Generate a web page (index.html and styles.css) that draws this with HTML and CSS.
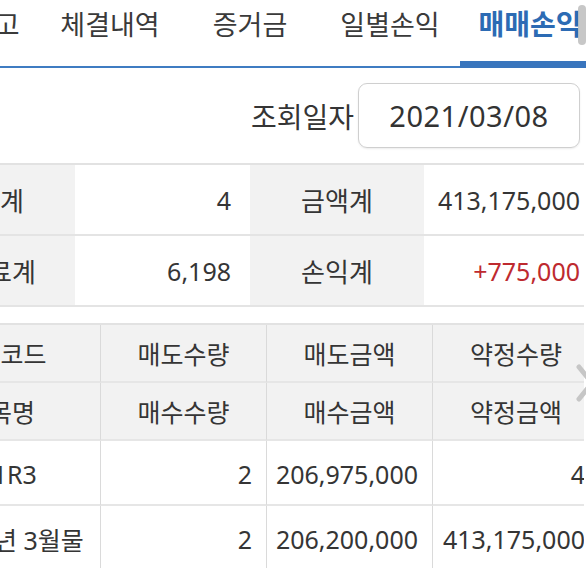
FILE: index.html
```html
<!DOCTYPE html>
<html lang="ko">
<head>
<meta charset="utf-8">
<title>매매손익</title>
<link rel="stylesheet" href="styles.css">
</head>
<body>
<div class="screen">
  <nav class="tabbar">
    <div class="tabs">
      <div class="tab">미결잔고</div>
      <div class="tab">체결내역</div>
      <div class="tab">증거금</div>
      <div class="tab">일별손익</div>
      <div class="tab active">매매손익</div>
    </div>
  </nav>

  <div class="search">
    <span class="search-label">조회일자</span>
    <div class="date-box">2021/03/08</div>
  </div>

  <div class="viewport">
    <div class="scroller">
      <div class="summary">
        <div class="s-label">수량계</div>
        <div class="s-value">4</div>
        <div class="s-label">금액계</div>
        <div class="s-value">413,175,000</div>
        <div class="s-label">수수료계</div>
        <div class="s-value">6,198</div>
        <div class="s-label">손익계</div>
        <div class="s-value up">+775,000</div>
      </div>

      <div class="grid">
        <div class="th">종목코드</div>
        <div class="th">매도수량</div>
        <div class="th">매도금액</div>
        <div class="th">약정수량</div>
        <div class="th">종목명</div>
        <div class="th">매수수량</div>
        <div class="th">매수금액</div>
        <div class="th">약정금액</div>

        <div class="td name">101R3</div>
        <div class="td">2</div>
        <div class="td">206,975,000</div>
        <div class="td">4</div>
        <div class="td name">F 2021년 3월물</div>
        <div class="td">2</div>
        <div class="td">206,200,000</div>
        <div class="td">413,175,000</div>
      </div>
    </div>
  </div>

  <div class="scroll-thumb"></div>
  <svg class="scroll-hint" width="12" height="42" viewBox="0 0 12 42">
    <polyline points="5,5 18,21 5,37" fill="none" stroke="#c6c6c6" stroke-width="5" stroke-linecap="round" stroke-linejoin="round"/>
  </svg>
</div>
</body>
</html>
```

FILE: styles.css
```css
html, body {
  margin: 0;
  padding: 0;
  background: #ffffff;
  overflow: hidden;
}

body {
  font-family: "Noto Sans", "Noto Sans CJK KR", sans-serif;
  color: #353535;
}

.screen {
  position: relative;
  width: 586px;
  height: 568px;
  overflow: hidden;
}

/* ---------- tabs ---------- */
.tabbar {
  height: 68px;
  overflow: hidden;
}

.tabs {
  display: flex;
  margin-left: -100px;
  width: max-content;
}

.tab {
  flex: none;
  width: 140px;
  height: 68px;
  box-sizing: border-box;
  border-bottom: 2px solid #3f7cc2;
  font-size: 27px;
  line-height: 49px;
  text-align: center;
  color: #3a3a3a;
}

.tab.active {
  color: #2c6bb4;
  font-weight: 700;
  font-size: 28px;
  border-bottom: 7px solid #3975bd;
}

/* ---------- search row ---------- */
.search {
  height: 95px;
  display: flex;
  align-items: center;
  justify-content: flex-end;
  gap: 4px;
  padding-right: 6px;
}

.search-label {
  font-size: 28px;
  color: #353535;
}

.date-box {
  width: 222px;
  height: 65px;
  box-sizing: border-box;
  border: 1px solid #cfcfcf;
  border-radius: 9px;
  box-shadow: 0 1px 2px rgba(0, 0, 0, 0.08);
  display: flex;
  align-items: center;
  justify-content: center;
  font-size: 29px;
  letter-spacing: 0.5px;
  color: #333;
}

/* ---------- horizontally scrolled content ---------- */
.viewport {
  width: 584px;
  overflow: hidden;
}

.scroller {
  margin-left: -99px;
  width: 698px;
}

.summary {
  display: grid;
  grid-template-columns: 174px 175px 174px 175px;
  border-top: 2px solid #e2e2e2;
}

.s-label,
.s-value {
  height: 71px;
  box-sizing: border-box;
  border-bottom: 2px solid #e4e4e4;
  display: flex;
  align-items: center;
}

.s-label {
  background: #f2f2f2;
  justify-content: center;
  font-size: 26px;
}

.s-value {
  background: #ffffff;
  justify-content: flex-end;
  padding-right: 19px;
  font-size: 25px;
}

.s-value.up {
  color: #be2a2f;
}

.grid {
  margin-top: 16px;
  display: grid;
  grid-template-columns: 200px 166px 166px 166px;
  border-top: 2px solid #e2e2e2;
}

.th,
.td {
  box-sizing: border-box;
  border-bottom: 2px solid #e6e6e6;
  border-right: 1px solid #dadada;
  display: flex;
  align-items: center;
  white-space: nowrap;
}

.th:nth-child(4n),
.td:nth-child(4n) {
  border-right: none;
}

.th {
  height: 58px;
  background: #f2f2f2;
  justify-content: center;
  font-size: 25px;
}

.td {
  height: 65px;
  background: #ffffff;
  justify-content: flex-end;
  padding-right: 14px;
  font-size: 25px;
  padding-top: 3px;
}

.td.name {
  justify-content: center;
  padding-right: 0;
}

/* ---------- overlays ---------- */
.scroll-thumb {
  position: absolute;
  left: 578px;
  top: 5px;
  width: 8px;
  height: 40px;
  border-radius: 4px;
  background: #bdbdbd;
  opacity: 0.85;
}

.scroll-hint {
  position: absolute;
  left: 574px;
  top: 362px;
}
```
